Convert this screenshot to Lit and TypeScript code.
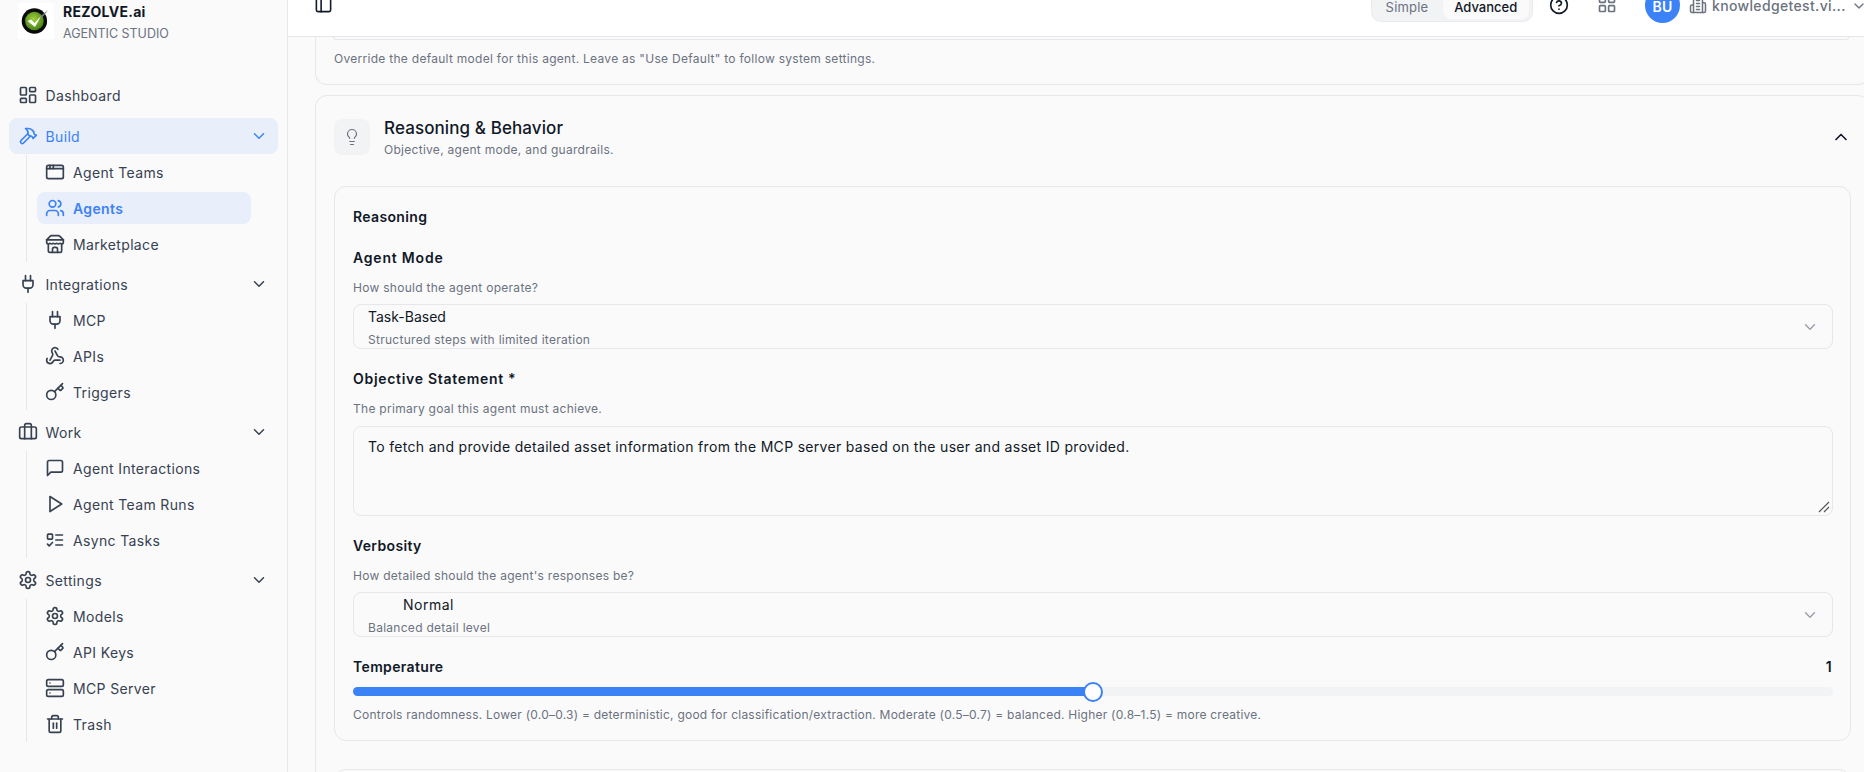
import { LitElement, html, css, svg } from "lit";
import { customElement } from "lit/decorators.js";

const I: Record<string, any> = {
  dashboard: svg`<rect x="3" y="3" width="7" height="9" rx="1"/><rect x="14" y="3" width="7" height="5" rx="1"/><rect x="14" y="12" width="7" height="9" rx="1"/><rect x="3" y="16" width="7" height="5" rx="1"/>`,
  hammer: svg`<path d="m15 12-8.373 8.373a1 1 0 1 1-3-3L12 9"/><path d="m18 15 4-4"/><path d="m21.5 11.5-1.914-1.914A2 2 0 0 1 19 8.172V7l-2.26-2.26a6 6 0 0 0-4.202-1.756L9 2.96l.92.82A6.18 6.18 0 0 1 12 8.4V10l2 2h1.172a2 2 0 0 1 1.414.586L18.5 14.5"/>`,
  window: svg`<rect x="2" y="4" width="20" height="16" rx="2"/><path d="M10 4v4"/><path d="M2 8h20"/><path d="M6 4v4"/>`,
  users: svg`<path d="M16 21v-2a4 4 0 0 0-4-4H6a4 4 0 0 0-4 4v2"/><circle cx="9" cy="7" r="4"/><path d="M22 21v-2a4 4 0 0 0-3-3.87"/><path d="M16 3.13a4 4 0 0 1 0 7.75"/>`,
  store: svg`<path d="m2 7 4.41-4.41A2 2 0 0 1 7.83 2h8.34a2 2 0 0 1 1.42.59L22 7"/><path d="M4 12v8a2 2 0 0 0 2 2h12a2 2 0 0 0 2-2v-8"/><path d="M15 22v-4a2 2 0 0 0-2-2h-2a2 2 0 0 0-2 2v4"/><path d="M2 7h20"/><path d="M22 7v3a2 2 0 0 1-2 2a2.7 2.7 0 0 1-1.59-.63.7.7 0 0 0-.82 0A2.7 2.7 0 0 1 16 12a2.7 2.7 0 0 1-1.59-.63.7.7 0 0 0-.82 0A2.7 2.7 0 0 1 12 12a2.7 2.7 0 0 1-1.59-.63.7.7 0 0 0-.82 0A2.7 2.7 0 0 1 8 12a2.7 2.7 0 0 1-1.59-.63.7.7 0 0 0-.82 0A2.7 2.7 0 0 1 4 12a2 2 0 0 1-2-2V7"/>`,
  plug: svg`<path d="M12 22v-5"/><path d="M9 8V2"/><path d="M15 8V2"/><path d="M18 8v5a4 4 0 0 1-4 4h-4a4 4 0 0 1-4-4V8Z"/>`,
  webhook: svg`<path d="M18 16.98h-5.99c-1.1 0-1.95.94-2.48 1.9A4 4 0 0 1 2 17c.01-.7.2-1.4.57-2"/><path d="m6 17 3.13-5.78c.53-.97.1-2.18-.5-3.1a4 4 0 1 1 6.89-4.06"/><path d="m12 6 3.13 5.73C15.66 12.7 16.9 13 18 13a4 4 0 0 1 0 8"/>`,
  key: svg`<path d="m15.5 7.5 2.3 2.3a1 1 0 0 0 1.4 0l2.1-2.1a1 1 0 0 0 0-1.4L19 4"/><path d="m21 2-9.6 9.6"/><circle cx="7.5" cy="15.5" r="5.5"/>`,
  briefcase: svg`<path d="M16 20V4a2 2 0 0 0-2-2h-4a2 2 0 0 0-2 2v16"/><rect x="2" y="6" width="20" height="14" rx="2"/>`,
  message: svg`<path d="M21 15a2 2 0 0 1-2 2H7l-4 4V5a2 2 0 0 1 2-2h14a2 2 0 0 1 2 2z"/>`,
  play: svg`<polygon points="6 3 20 12 6 21 6 3"/>`,
  todo: svg`<rect x="3" y="5" width="6" height="6" rx="1"/><path d="m3 17 2 2 4-4"/><path d="M13 6h8"/><path d="M13 12h8"/><path d="M13 18h8"/>`,
  settings: svg`<path d="M12.22 2h-.44a2 2 0 0 0-2 2v.18a2 2 0 0 1-1 1.73l-.43.25a2 2 0 0 1-2 0l-.15-.08a2 2 0 0 0-2.73.73l-.22.38a2 2 0 0 0 .73 2.73l.15.1a2 2 0 0 1 1 1.72v.51a2 2 0 0 1-1 1.74l-.15.09a2 2 0 0 0-.73 2.73l.22.38a2 2 0 0 0 2.73.73l.15-.08a2 2 0 0 1 2 0l.43.25a2 2 0 0 1 1 1.73V20a2 2 0 0 0 2 2h.44a2 2 0 0 0 2-2v-.18a2 2 0 0 1 1-1.73l.43-.25a2 2 0 0 1 2 0l.15.08a2 2 0 0 0 2.73-.73l.22-.39a2 2 0 0 0-.73-2.73l-.15-.08a2 2 0 0 1-1-1.74v-.5a2 2 0 0 1 1-1.74l.15-.09a2 2 0 0 0 .73-2.73l-.22-.38a2 2 0 0 0-2.73-.73l-.15.08a2 2 0 0 1-2 0l-.43-.25a2 2 0 0 1-1-1.73V4a2 2 0 0 0-2-2z"/><circle cx="12" cy="12" r="3"/>`,
  server: svg`<rect x="2" y="2" width="20" height="8" rx="2"/><rect x="2" y="14" width="20" height="8" rx="2"/><path d="M6 6h.01"/><path d="M6 18h.01"/>`,
  trash: svg`<path d="M3 6h18"/><path d="M19 6v14c0 1-1 2-2 2H7c-1 0-2-1-2-2V6"/><path d="M8 6V4c0-1 1-2 2-2h4c1 0 2 1 2 2v2"/><path d="M10 11v6"/><path d="M14 11v6"/>`,
  bulb: svg`<path d="M15 14c.2-1 .7-1.7 1.5-2.5 1-.9 1.5-2.2 1.5-3.5A6 6 0 0 0 6 8c0 1 .2 2.2 1.5 3.5.7.7 1.3 1.5 1.5 2.5"/><path d="M9 18h6"/><path d="M10 22h4"/>`,
  panel: svg`<rect x="3" y="3" width="18" height="18" rx="2"/><path d="M9 3v18"/>`,
  help: svg`<circle cx="12" cy="12" r="10"/><path d="M9.09 9a3 3 0 0 1 5.83 1c0 2-3 3-3 3"/><path d="M12 17h.01"/>`,
  grid: svg`<rect x="3" y="3" width="7" height="7" rx="1"/><rect x="14" y="3" width="7" height="7" rx="1"/><rect x="14" y="14" width="7" height="7" rx="1"/><rect x="3" y="14" width="7" height="7" rx="1"/>`,
  building: svg`<path d="M6 22V4a2 2 0 0 1 2-2h8a2 2 0 0 1 2 2v18Z"/><path d="M6 12H4a2 2 0 0 0-2 2v6a2 2 0 0 0 2 2h2"/><path d="M18 9h2a2 2 0 0 1 2 2v9a2 2 0 0 1-2 2h-2"/><path d="M10 6h4"/><path d="M10 10h4"/><path d="M10 14h4"/><path d="M10 18h4"/>`,
  down: svg`<path d="m6 9 6 6 6-6"/>`,
  up: svg`<path d="m18 15-6-6-6 6"/>`,
};

const icon = (n: string, cls = "ic") =>
  html`<svg class=${cls} viewBox="0 0 24 24" fill="none" stroke="currentColor" stroke-width="2" stroke-linecap="round" stroke-linejoin="round">${I[n]}</svg>`;

const groups = [
  { icon: "hammer", label: "Build", active: true, items: [["window", "Agent Teams"], ["users", "Agents", true], ["store", "Marketplace"]] },
  { icon: "plug", label: "Integrations", items: [["plug", "MCP"], ["webhook", "APIs"], ["key", "Triggers"]] },
  { icon: "briefcase", label: "Work", items: [["message", "Agent Interactions"], ["play", "Agent Team Runs"], ["todo", "Async Tasks"]] },
  { icon: "settings", label: "Settings", items: [["settings", "Models"], ["key", "API Keys"], ["server", "MCP Server"], ["trash", "Trash"]] },
] as any[];

@customElement("app-root")
export class AppRoot extends LitElement {
  static styles = css`
    :host { display: block; width: 1864px; height: 772px; overflow: hidden; background: #fafafa; color: #111827;
      font-family: Inter, "Noto Sans", sans-serif; font-size: 14px; }
    * { box-sizing: border-box; }
    .app { display: flex; height: 772px; }
    .ic { width: 20px; height: 20px; flex: none; }
    .side { width: 288px; flex: none; height: 772px; background: #fafafa; border-right: 1px solid #e5e7eb; padding: 3px 9px 0; overflow: hidden; }
    .brand { display: flex; gap: 9px; padding-left: 9px; height: 74px; }
    .logo { width: 36px; height: 36px; background: #fff; flex: none; }
    .logo svg { display: block; width: 36px; height: 36px; }
    .bt { margin-top: -1px; }
    .b1 { font-weight: 700; font-size: 14px; line-height: 20px; color: #111827; letter-spacing: .3px; }
    .b2 { font-size: 12.5px; line-height: 20px; margin-top: 2px; color: #6b7280; }
    .nav { display: flex; flex-direction: column; gap: 4px; }
    .dash { margin-bottom: 1px; }
    .top { display: flex; align-items: center; height: 36px; padding: 0 9px; gap: 7.5px; border-radius: 8px; color: #374151; letter-spacing: .35px; }
    .top.on { background: #e8eefa; color: #3b82f6; }
    .top .lab { flex: 1; }
    .chev { width: 18px; height: 18px; margin-right: 1px; flex: none; }
    .sub { margin: 1px 0 0 17px; border-left: 1px solid #e5e7eb; padding: 1px 0 2px 10px; display: flex; flex-direction: column; gap: 4px; }
    .si { display: flex; align-items: center; height: 32px; padding: 0 8px; gap: 8px; border-radius: 8px; color: #374151; width: 214px; letter-spacing: .35px; }
    .si.on { background: #e8eefa; color: #3b82f6; font-weight: 600; }

    .main { flex: 1; min-width: 0; display: flex; flex-direction: column; height: 772px; }
    .hdr { height: 37px; flex: none; background: #fff; border-bottom: 1px solid #e5e7eb; display: flex; align-items: flex-start; padding-left: 26px; overflow: hidden; }
    .panel { width: 19px; height: 19px; color: #111827; margin-top: -5px; flex: none; }
    .sp { flex: 1; }
    .tools { display: flex; align-items: flex-start; margin-right: -3px; }
    .seg { display: flex; height: 22px; width: 162px; background: #f1f3f5; border: 1px solid #e9ebee; border-top: 0; border-radius: 0 0 10px 10px; margin-right: 16.5px; font-size: 13px; overflow: hidden; padding-right: 2.5px; }
    .seg span { display: flex; align-items: center; justify-content: center; height: 19px; padding-bottom: 6px; }
    .seg .s { width: 71px; color: #6b7280; letter-spacing: .2px; }
    .seg .a { flex: 1; background: #fafafa; color: #111827; font-weight: 500; border-radius: 0 0 8px 8px; }
    .help { color: #111827; margin: -5px 27.5px 0 0; height: 20px; }
    .gridi { color: #6b7280; margin: -6px 28.5px 0 0; height: 20px; }
    .av { width: 35px; height: 36px; margin: -13.3px 9px 0 0; border-radius: 50%; background: #3b82f6; color: #fff; font-weight: 600; font-size: 14px; display: flex; align-items: center; justify-content: center; padding-top: 3px; letter-spacing: .3px; }
    .bld { color: #6b7280; margin: -4px 5px 0 0; height: 18px; }
    .bld svg { width: 18px; height: 18px; display: block; }
    .ten { margin-top: -4px; width: 133px; font-size: 14px; line-height: 20px; color: #6b7280; white-space: nowrap; font-weight: 500; margin-right: 6px; letter-spacing: .35px; }
    .tchev { width: 16px; height: 16px; color: #6b7280; margin-top: -2px; flex: none; }

    .scroll { flex: 1; min-height: 0; overflow: hidden; padding-left: 27px; }
    .card { width: 1555px; border: 1px solid #e5e7eb; border-radius: 12px; background: #fafafa; }
    .c1 { height: 48px; border-top: 0; border-radius: 0 0 12px 12px; padding: 0 18px; }
    .c1top { height: 3px; width: 1516px; margin: 0 0 -3px 18px; border: 1px solid #e5e7eb; border-top: 0; border-radius: 0 0 12px 12px; position: relative; }
    .c1 p { margin: 0; padding-top: 14px; font-size: 12px; line-height: 16px; color: #6b7280; letter-spacing: .28px; }
    .c2 { margin-top: 10px; padding: 23px 18px 0; height: 720px; }
    .sechead { display: flex; align-items: center; gap: 14px; height: 36px; }
    .ibox { width: 36px; height: 36px; border-radius: 8px; background: #f1f3f5; display: flex; align-items: center; justify-content: center; color: #6b7280; flex: none; }
    .ibox svg { width: 18px; height: 18px; stroke-width: 1.6; }
    .st { flex: 1; }
    .st h3 { margin: 0; font-size: 17px; font-weight: 500; line-height: 22px; color: #111827; letter-spacing: .1px; }
    .st p { margin: 3px 0 0; font-size: 12px; line-height: 16px; color: #6b7280; letter-spacing: .28px; }
    .up { width: 20px; height: 20px; color: #111827; flex: none; }
    .inner { margin-top: 31px; width: 1517px; height: 555px; border: 1px solid #e5e7eb; border-radius: 12px; padding: 20px 18px 0; }
    .inner2 { margin-top: 28px; width: 1517px; height: 60px; border: 1px solid #e5e7eb; border-radius: 12px; }
    .h, .lbl { font-weight: 600; font-size: 14px; line-height: 20px; color: #111827; letter-spacing: .35px; }
    .lbl.wide { letter-spacing: .8px; margin-top: 21px; }
    .lbl.mid { letter-spacing: .7px; }
    .desc { font-size: 12px; line-height: 16px; color: #6b7280; letter-spacing: .28px; }
    .m1 { margin-top: 20px; }
    .m2 { margin-top: 12px; }
    .sel { margin-top: 8px; height: 45px; width: 1480px; border: 1px solid #e5e7eb; border-radius: 8px; display: flex; align-items: center; overflow: hidden; padding: 0 13px 0 14px; }
    .sel .t { flex: 1; height: 43px; padding-top: 2px; overflow: hidden; }
    .sel .a { font-size: 14px; line-height: 20px; color: #111827; }
    .sel .a.indent { padding-left: 35px; letter-spacing: .5px; }
    .sel .b { font-size: 12px; line-height: 16px; color: #6b7280; margin-top: 5px; letter-spacing: .28px; }
    .sel svg { width: 18px; height: 18px; color: #9ca3af; flex: none; }
    .ta { margin-top: 9px; position: relative; height: 90px; width: 1480px; border: 1px solid #e5e7eb; border-radius: 8px; padding: 10px 14px; font-size: 14px; line-height: 20px; color: #111827; letter-spacing: .31px; }
    .grip { position: absolute; right: 2px; bottom: 2px; width: 12px; height: 12px; color: #555; }
    .row { display: flex; justify-content: space-between; }
    .track { position: relative; margin-top: 10px; width: 1480px; height: 9px; border-radius: 5px; background: #f1f3f5; }
    .fill { height: 9px; border-radius: 5px; background: #3b82f6; }
    .thumb { position: absolute; top: -5.5px; width: 20px; height: 20px; margin-left: -10px; background: #fff; border: 2px solid #3b82f6; border-radius: 50%; }
    .tdesc { margin-top: 11px; letter-spacing: .235px; }
  `;

  private group(g: any) {
    return html`<div>
      <div class="top ${g.active ? "on" : ""}">${icon(g.icon)}<span class="lab">${g.label}</span>${icon("down", "chev")}</div>
      <div class="sub">
        ${g.items.map((i: any) => html`<div class="si ${i[2] ? "on" : ""}">${icon(i[0])}<span>${i[1]}</span></div>`)}
      </div>
    </div>`;
  }

  render() {
    return html`<div class="app">
      <aside class="side">
        <div class="brand">
          <div class="logo">
            <svg viewBox="0 0 36 36">
              <defs><radialGradient id="g" cx=".45" cy=".4" r=".65"><stop offset="0" stop-color="#a4d03e"/><stop offset="1" stop-color="#3f7d12"/></radialGradient></defs>
              <circle cx="16.4" cy="18" r="12.7" fill="#0a0a0a"/>
              <circle cx="16.4" cy="18" r="9.3" fill="url(#g)"/>
              <path d="M22 13.5 30 7l-6 8z" fill="#777"/>
              <path d="M9.5 18l3.5-1.5 3.5 3.5 6.5-7-6 11z" fill="#fff"/>
            </svg>
          </div>
          <div class="bt"><div class="b1">REZOLVE.ai</div><div class="b2">AGENTIC STUDIO</div></div>
        </div>
        <nav class="nav">
          <div class="top dash">${icon("dashboard")}<span class="lab">Dashboard</span></div>
          ${groups.map((g) => this.group(g))}
        </nav>
      </aside>
      <div class="main">
        <header class="hdr">
          ${icon("panel", "panel")}
          <div class="sp"></div>
          <div class="tools">
            <div class="seg"><span class="s">Simple</span><span class="a">Advanced</span></div>
            <span class="help">${icon("help")}</span>
            <span class="gridi">${icon("grid")}</span>
            <span class="av">BU</span>
            <span class="bld">${icon("building", "")}</span>
            <span class="ten">knowledgetest.vi...</span>
            ${icon("down", "tchev")}
          </div>
        </header>
        <div class="scroll">
          <div class="c1top"></div>
          <div class="card c1"><p>Override the default model for this agent. Leave as "Use Default" to follow system settings.</p></div>
          <div class="card c2">
            <div class="sechead">
              <div class="ibox">${icon("bulb", "")}</div>
              <div class="st"><h3>Reasoning &amp; Behavior</h3><p>Objective, agent mode, and guardrails.</p></div>
              ${icon("up", "up")}
            </div>
            <div class="inner">
              <div class="h">Reasoning</div>
              <div class="lbl wide">Agent Mode</div>
              <div class="desc m2">How should the agent operate?</div>
              <div class="sel"><div class="t"><div class="a">Task-Based</div><div class="b">Structured steps with limited iteration</div></div>${icon("down", "")}</div>
              <div class="lbl mid m1">Objective Statement *</div>
              <div class="desc m2">The primary goal this agent must achieve.</div>
              <div class="ta">To fetch and provide detailed asset information from the MCP server based on the user and asset ID provided.
                <svg class="grip" viewBox="0 0 12 12" fill="none" stroke="currentColor" stroke-width="1.2"><path d="M1 11 11 1M6 11l5-5"/></svg>
              </div>
              <div class="lbl m1">Verbosity</div>
              <div class="desc m2">How detailed should the agent's responses be?</div>
              <div class="sel"><div class="t"><div class="a indent">Normal</div><div class="b">Balanced detail level</div></div>${icon("down", "")}</div>
              <div class="row m1"><span class="lbl">Temperature</span><span class="lbl">1</span></div>
              <div class="track"><div class="fill" style="width:740px"></div><div class="thumb" style="left:740px"></div></div>
              <div class="desc tdesc">Controls randomness. Lower (0.0–0.3) = deterministic, good for classification/extraction. Moderate (0.5–0.7) = balanced. Higher (0.8–1.5) = more creative.</div>
            </div>
            <div class="inner2"></div>
          </div>
        </div>
      </div>
    </div>`;
  }
}
